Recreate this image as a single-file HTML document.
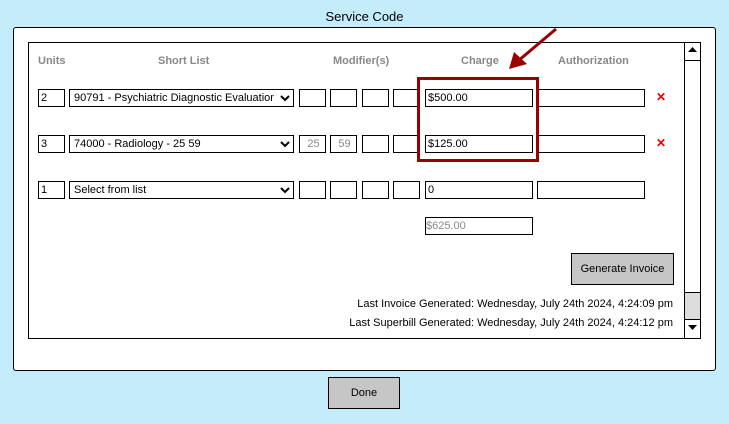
<!DOCTYPE html>
<html><head><style>
*{box-sizing:border-box;margin:0;padding:0}
body{width:729px;height:424px;background:#c5ecfb;font-family:"Liberation Sans",sans-serif;position:relative;overflow:hidden}
.a{position:absolute}
.in{position:absolute;border:1px solid #000;background:#fff;height:18px;font-size:11px;line-height:16px;padding-left:2px;color:#000;white-space:nowrap;overflow:hidden}
.hd{position:absolute;top:55px;font-size:11px;color:#888;font-weight:bold}
.x{position:absolute;color:#e00;font-size:12px;font-weight:bold}
.btn{position:absolute;background:#c6c6c6;border:1px solid #000;font-size:11px;text-align:center}
.sel{position:absolute;border:1px solid #000;background:#fff;height:18px;font-size:11px;line-height:16px;padding-left:4px;white-space:nowrap;overflow:hidden}
.sel svg{position:absolute;right:3px;top:4px}
.sel span{display:inline-block;width:200px;overflow:hidden}
</style></head><body>
<div class="a" style="left:0;top:9px;width:729px;text-align:center;font-size:13px">Service Code</div>
<div class="a" style="left:13px;top:27px;width:703px;height:344px;background:#fff;border:1px solid #000;border-radius:3px"></div>
<div class="a" style="left:28px;top:42px;width:673px;height:297px;border:1px solid #000"></div>
<div class="a" style="left:684px;top:42px;width:17px;height:297px;border:1px solid #000"></div>
<div class="a" style="left:684px;top:60px;width:17px;height:1px;background:#000"></div>
<div class="a" style="left:685px;top:292px;width:15px;height:28px;background:#ddd;border-top:1px solid #000;border-bottom:1px solid #000"></div>
<svg class="a" style="left:686px;top:45px" width="13" height="10"><path d="M2 7 L6.5 2 L11 7Z" fill="#000"/></svg>
<svg class="a" style="left:686px;top:322px" width="13" height="10"><path d="M2 3 L6.5 8 L11 3Z" fill="#000"/></svg>

<div class="hd" style="left:38px">Units</div>
<div class="hd" style="left:158px">Short List</div>
<div class="hd" style="left:333px">Modifier(s)</div>
<div class="hd" style="left:461px">Charge</div>
<div class="hd" style="left:558px">Authorization</div>

<!-- row1 -->
<div class="in" style="left:38px;top:89px;width:27px">2</div>
<div class="sel" style="left:69px;top:89px;width:225px"><span>90791 - Psychiatric Diagnostic Evaluation -</span><svg width="10" height="8"><path d="M1 2L5 6L9 2" stroke="#000" stroke-width="2" fill="none"/></svg></div>
<div class="in" style="left:299px;top:89px;width:27px"></div>
<div class="in" style="left:330px;top:89px;width:27px"></div>
<div class="in" style="left:362px;top:89px;width:27px"></div>
<div class="in" style="left:393px;top:89px;width:27px"></div>
<div class="in" style="left:425px;top:89px;width:108px">$500.00</div>
<div class="in" style="left:537px;top:89px;width:108px"></div>
<div class="x" style="left:656px;top:90px">✕</div>
<!-- row2 -->
<div class="in" style="left:38px;top:135px;width:27px">3</div>
<div class="sel" style="left:69px;top:135px;width:225px"><span>74000 - Radiology - 25 59</span><svg width="10" height="8"><path d="M1 2L5 6L9 2" stroke="#000" stroke-width="2" fill="none"/></svg></div>
<div class="in" style="left:299px;top:135px;width:27px;color:#888;text-align:center">25</div>
<div class="in" style="left:330px;top:135px;width:27px;color:#888;text-align:center">59</div>
<div class="in" style="left:362px;top:135px;width:27px"></div>
<div class="in" style="left:393px;top:135px;width:27px"></div>
<div class="in" style="left:425px;top:135px;width:108px">$125.00</div>
<div class="in" style="left:537px;top:135px;width:108px"></div>
<div class="x" style="left:656px;top:136px">✕</div>
<!-- row3 -->
<div class="in" style="left:38px;top:181px;width:27px">1</div>
<div class="sel" style="left:69px;top:181px;width:225px"><span>Select from list</span><svg width="10" height="8"><path d="M1 2L5 6L9 2" stroke="#000" stroke-width="2" fill="none"/></svg></div>
<div class="in" style="left:299px;top:181px;width:27px"></div>
<div class="in" style="left:330px;top:181px;width:27px"></div>
<div class="in" style="left:362px;top:181px;width:27px"></div>
<div class="in" style="left:393px;top:181px;width:27px"></div>
<div class="in" style="left:425px;top:181px;width:108px">0</div>
<div class="in" style="left:537px;top:181px;width:108px"></div>

<div class="in" style="left:425px;top:217px;width:108px;color:#888;padding-left:0">$625.00</div>

<div class="a" style="left:417px;top:77px;width:122px;height:85px;border:3px solid #9b0000"></div>
<svg class="a" style="left:500px;top:25px" width="60" height="50"><path d="M56 4 L18 36" stroke="#9b0000" stroke-width="3"/><path d="M9 44 L14 27 L27 39Z" fill="#9b0000"/></svg>

<div class="btn" style="left:571px;top:253px;width:103px;height:32px;line-height:30px">Generate Invoice</div>
<div class="a" style="right:56px;top:298px;font-size:11px;white-space:nowrap">Last Invoice Generated: Wednesday, July 24th 2024, 4:24:09 pm</div>
<div class="a" style="right:56px;top:317px;font-size:11px;white-space:nowrap">Last Superbill Generated: Wednesday, July 24th 2024, 4:24:12 pm</div>

<div class="btn" style="left:328px;top:377px;width:72px;height:32px;line-height:30px">Done</div>
</body></html>
